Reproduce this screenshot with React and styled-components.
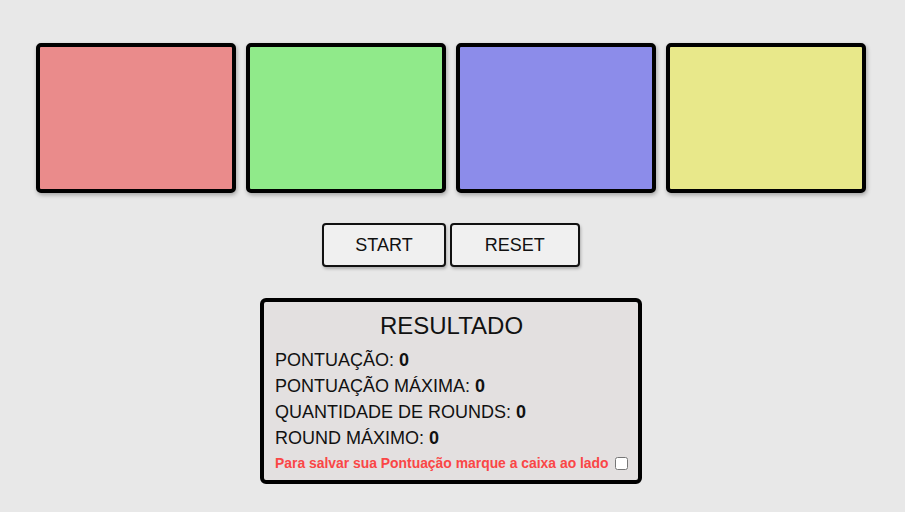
import styled, { createGlobalStyle } from 'styled-components'

const GlobalStyle = createGlobalStyle`
  body {
    margin: 0;
    background: #e8e8e8;
    font-family: 'Liberation Sans', Arial, sans-serif;
    color: #111;
  }
`

const Page = styled.div`
  display: flex;
  flex-direction: column;
  align-items: center;
  padding: 43px 3px 0 0;
`

const Board = styled.div`
  display: flex;
  gap: 10px;
`

const Pad = styled.div`
  box-sizing: border-box;
  width: 200px;
  height: 150px;
  border: 4px solid #000;
  border-radius: 5px;
  background: ${(p) => p.color};
  box-shadow: 1px 2px 4px rgba(0, 0, 0, 0.3);
`

const Controls = styled.div`
  display: flex;
  gap: 4px;
  margin-top: 30px;
`

const Button = styled.button`
  box-sizing: border-box;
  height: 44px;
  padding: 0 ${(p) => p.$pad}px;
  border: 2px solid #111;
  border-radius: 4px;
  background: #f0f0f0;
  font-family: 'Liberation Sans', Arial, sans-serif;
  font-size: 18px;
  color: #111;
  box-shadow: 1px 2px 3px rgba(0, 0, 0, 0.25);
  cursor: pointer;
`

const Panel = styled.div`
  box-sizing: border-box;
  width: 382px;
  margin-top: 31px;
  padding: 10px 10px 9px 11px;
  border: 4px solid #000;
  border-radius: 6px;
  background: #e3e0e0;
`

const Title = styled.h2`
  margin: 0 0 10px;
  text-align: center;
  font-size: 24px;
  font-weight: normal;
`

const Stat = styled.p`
  margin: 0 0 5px;
  font-size: 18px;
  b {
    font-weight: bold;
  }
`

const SaveRow = styled.label`
  display: flex;
  align-items: center;
  gap: 6px;
  margin-top: 6px;
  font-size: 13.9px;
  font-weight: bold;
  color: #fa4646;
  input {
    margin: 0;
    width: 13px;
    height: 13px;
  }
`

const pads = ['#ea8b8b', '#90ea8a', '#8c8cea', '#e8e88a']

const stats = [
  ['PONTUAÇÃO', 0],
  ['PONTUAÇÃO MÁXIMA', 0],
  ['QUANTIDADE DE ROUNDS', 0],
  ['ROUND MÁXIMO', 0],
]

const App = () => {
  return (
    <>
      <GlobalStyle />
      <Page>
        <Board>
          {pads.map((c) => (
            <Pad key={c} color={c} />
          ))}
        </Board>
        <Controls>
          <Button $pad={31}>START</Button>
          <Button $pad={33}>RESET</Button>
        </Controls>
        <Panel>
          <Title>RESULTADO</Title>
          {stats.map(([label, value]) => (
            <Stat key={label}>
              {label}: <b>{value}</b>
            </Stat>
          ))}
          <SaveRow>
            Para salvar sua Pontuação marque a caixa ao lado
            <input type='checkbox' />
          </SaveRow>
        </Panel>
      </Page>
    </>
  )
}

export default App
